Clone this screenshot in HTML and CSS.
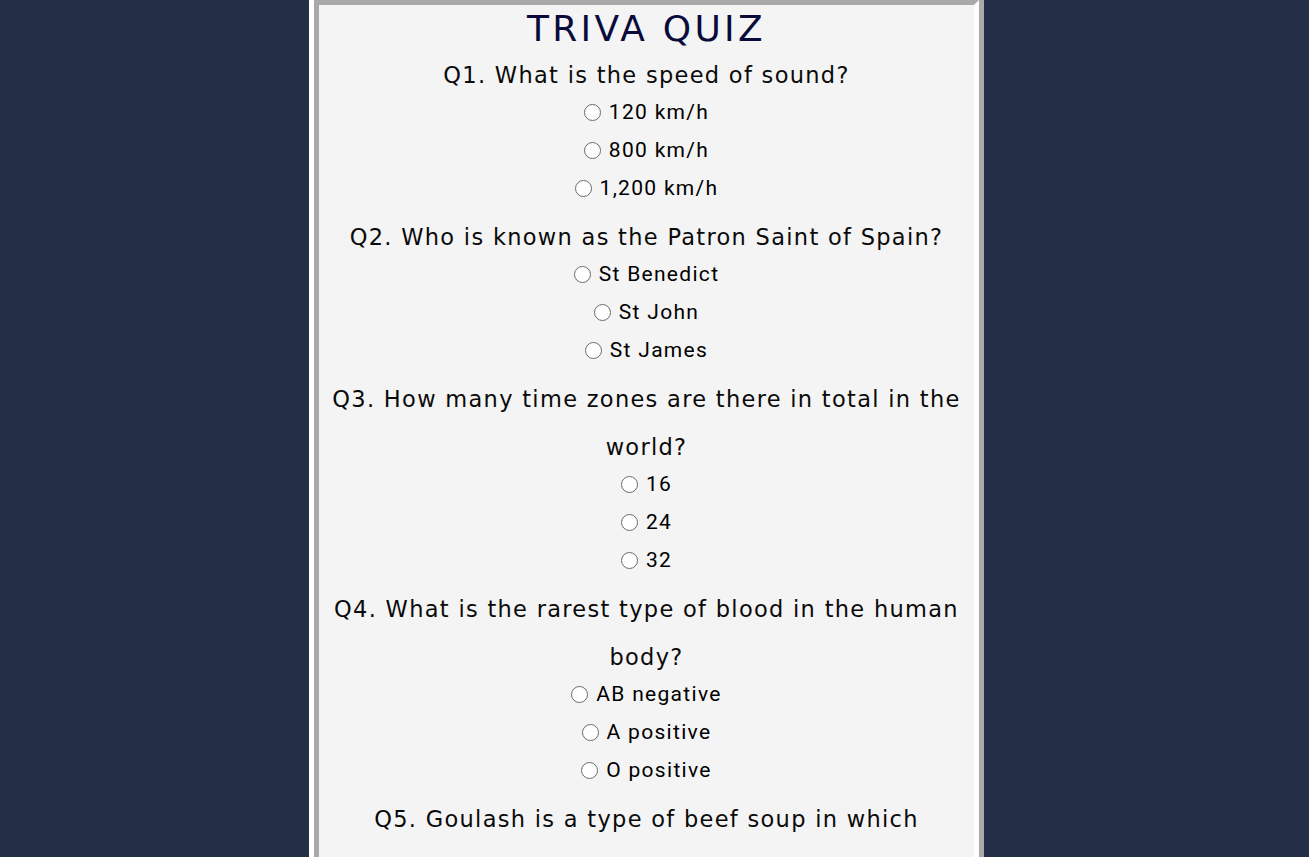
FILE: index.html
```html
<!DOCTYPE html>
<html lang="en">
<head>
<meta charset="utf-8">
<title>Triva Quiz</title>
<link rel="stylesheet" href="styles.css">
</head>
<body>
<div class="frame">
  <main class="card">
    <h1 class="title">TRIVA QUIZ</h1>

    <section class="block">
      <p class="question">Q1. What is the speed of sound?</p>
      <label class="option"><input type="radio" name="q1">120 km/h</label>
      <label class="option"><input type="radio" name="q1">800 km/h</label>
      <label class="option"><input type="radio" name="q1">1,200 km/h</label>
    </section>

    <section class="block">
      <p class="question">Q2. Who is known as the Patron Saint of Spain?</p>
      <label class="option"><input type="radio" name="q2">St Benedict</label>
      <label class="option"><input type="radio" name="q2">St John</label>
      <label class="option"><input type="radio" name="q2">St James</label>
    </section>

    <section class="block">
      <p class="question">Q3. How many time zones are there in total in the world?</p>
      <label class="option"><input type="radio" name="q3">16</label>
      <label class="option"><input type="radio" name="q3">24</label>
      <label class="option"><input type="radio" name="q3">32</label>
    </section>

    <section class="block">
      <p class="question">Q4. What is the rarest type of blood in the human body?</p>
      <label class="option"><input type="radio" name="q4">AB negative</label>
      <label class="option"><input type="radio" name="q4">A positive</label>
      <label class="option"><input type="radio" name="q4">O positive</label>
    </section>

    <section class="block">
      <p class="question">Q5. Goulash is a type of beef soup in which country?</p>
      <label class="option"><input type="radio" name="q5">Hungary</label>
      <label class="option"><input type="radio" name="q5">Czech Republic</label>
      <label class="option"><input type="radio" name="q5">Slovakia</label>
    </section>
  </main>
</div>
</body>
</html>
```
FILE: styles.css
```css
html, body {
  margin: 0;
  padding: 0;
}

body {
  background: #252e47;
  padding-right: 16px;
  min-height: 100vh;
}

.frame {
  width: 665px;
  margin: 0 auto;
  border-left: 5px solid #ffffff;
  border-right: 5px solid #a9a9a9;
  min-height: 100vh;
  display: flex;
}

.card {
  flex: 1;
  background: #f4f4f4;
  border-top: 5px solid #a9a9a9;
  border-left: 5px solid #a9a9a9;
  border-right: 5px solid #ffffff;
  padding: 0 6px 40px;
  text-align: center;
}

.title {
  margin: 0;
  padding-top: 7px;
  font-family: "DejaVu Sans", "Noto Sans", sans-serif;
  font-weight: normal;
  font-size: 36px;
  line-height: 33px;
  letter-spacing: 3.3px;
  color: #0b0b3b;
}

.block {
  display: flex;
  flex-direction: column;
}

.question {
  margin: 0 0 -6px;
  padding-top: 6px;
  font-family: "DejaVu Sans", "Noto Sans", sans-serif;
  font-size: 22.5px;
  line-height: 48px;
  letter-spacing: 1.3px;
  color: #0a0a0a;
}

.option {
  display: flex;
  justify-content: center;
  align-items: center;
  gap: 8px;
  height: 38px;
  font-family: Roboto, "Liberation Sans", sans-serif;
  font-size: 21px;
  line-height: 38px;
  letter-spacing: 1.3px;
  color: #000;
}

.option input {
  appearance: none;
  -webkit-appearance: none;
  margin: 0;
  width: 17px;
  height: 17px;
  border: 1.5px solid #6a6a6a;
  border-radius: 50%;
  background: #ffffff;
  box-sizing: border-box;
  flex: none;
}
```
